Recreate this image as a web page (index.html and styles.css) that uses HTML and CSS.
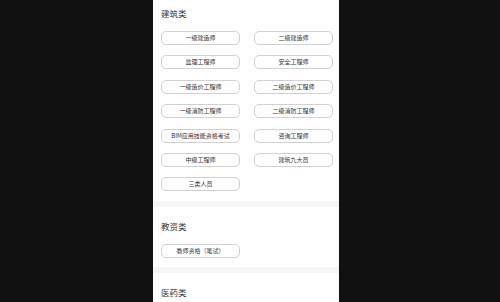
FILE: index.html
```html
<!DOCTYPE html>
<html lang="zh-CN">
<head>
    <meta charset="UTF-8">
    <meta name="viewport" content="width=device-width, initial-scale=1.0">
    <title>考试分类</title>
    <link rel="stylesheet" href="styles.css">
</head>
<body>
    <div class="panel">
        <div class="section">
            <div class="section-title">建筑类</div>
            <div class="tags">
                <button type="button" class="tag">一级建造师</button>
                <button type="button" class="tag">二级建造师</button>
                <button type="button" class="tag">监理工程师</button>
                <button type="button" class="tag">安全工程师</button>
                <button type="button" class="tag">一级造价工程师</button>
                <button type="button" class="tag">二级造价工程师</button>
                <button type="button" class="tag">一级消防工程师</button>
                <button type="button" class="tag">二级消防工程师</button>
                <button type="button" class="tag">BIM应用技能资格考试</button>
                <button type="button" class="tag">咨询工程师</button>
                <button type="button" class="tag">中级工程师</button>
                <button type="button" class="tag">建筑九大员</button>
                <button type="button" class="tag">三类人员</button>
            </div>
        </div>

        <div class="section">
            <div class="section-title">教资类</div>
            <div class="tags">
                <button type="button" class="tag">教师资格（笔试）</button>
            </div>
        </div>

        <div class="section">
            <div class="section-title">医药类</div>
        </div>
    </div>
</body>
</html>
```

FILE: styles.css
```css
* {
    box-sizing: border-box;
}

body {
    margin: 0;
    height: 100vh;
    overflow: hidden;
    background-color: #111111;
    font-family: "Noto Sans CJK SC", "Noto Sans", sans-serif;
}

.panel {
    width: 186px;
    height: 100vh;
    margin-left: 153px;
    background-color: #f5f5f5;
    overflow: hidden;
}

.section {
    background-color: #ffffff;
    padding: 13px 8px 9.5px;
    margin-bottom: 6px;
}

.section:first-child {
    padding-top: 7px;
}

.section-title {
    font-size: 8.5px;
    line-height: 12px;
    color: #333333;
    margin-bottom: 12px;
}

.tags {
    display: grid;
    grid-template-columns: 79px 79px;
    column-gap: 14px;
    row-gap: 10.4px;
}

.tag {
    height: 14px;
    padding: 0;
    border: 1px solid #d0d0d0;
    border-radius: 5px;
    background-color: #ffffff;
    color: #333333;
    font-family: inherit;
    font-size: 6px;
    line-height: 12px;
    text-align: center;
    cursor: pointer;
}
```
